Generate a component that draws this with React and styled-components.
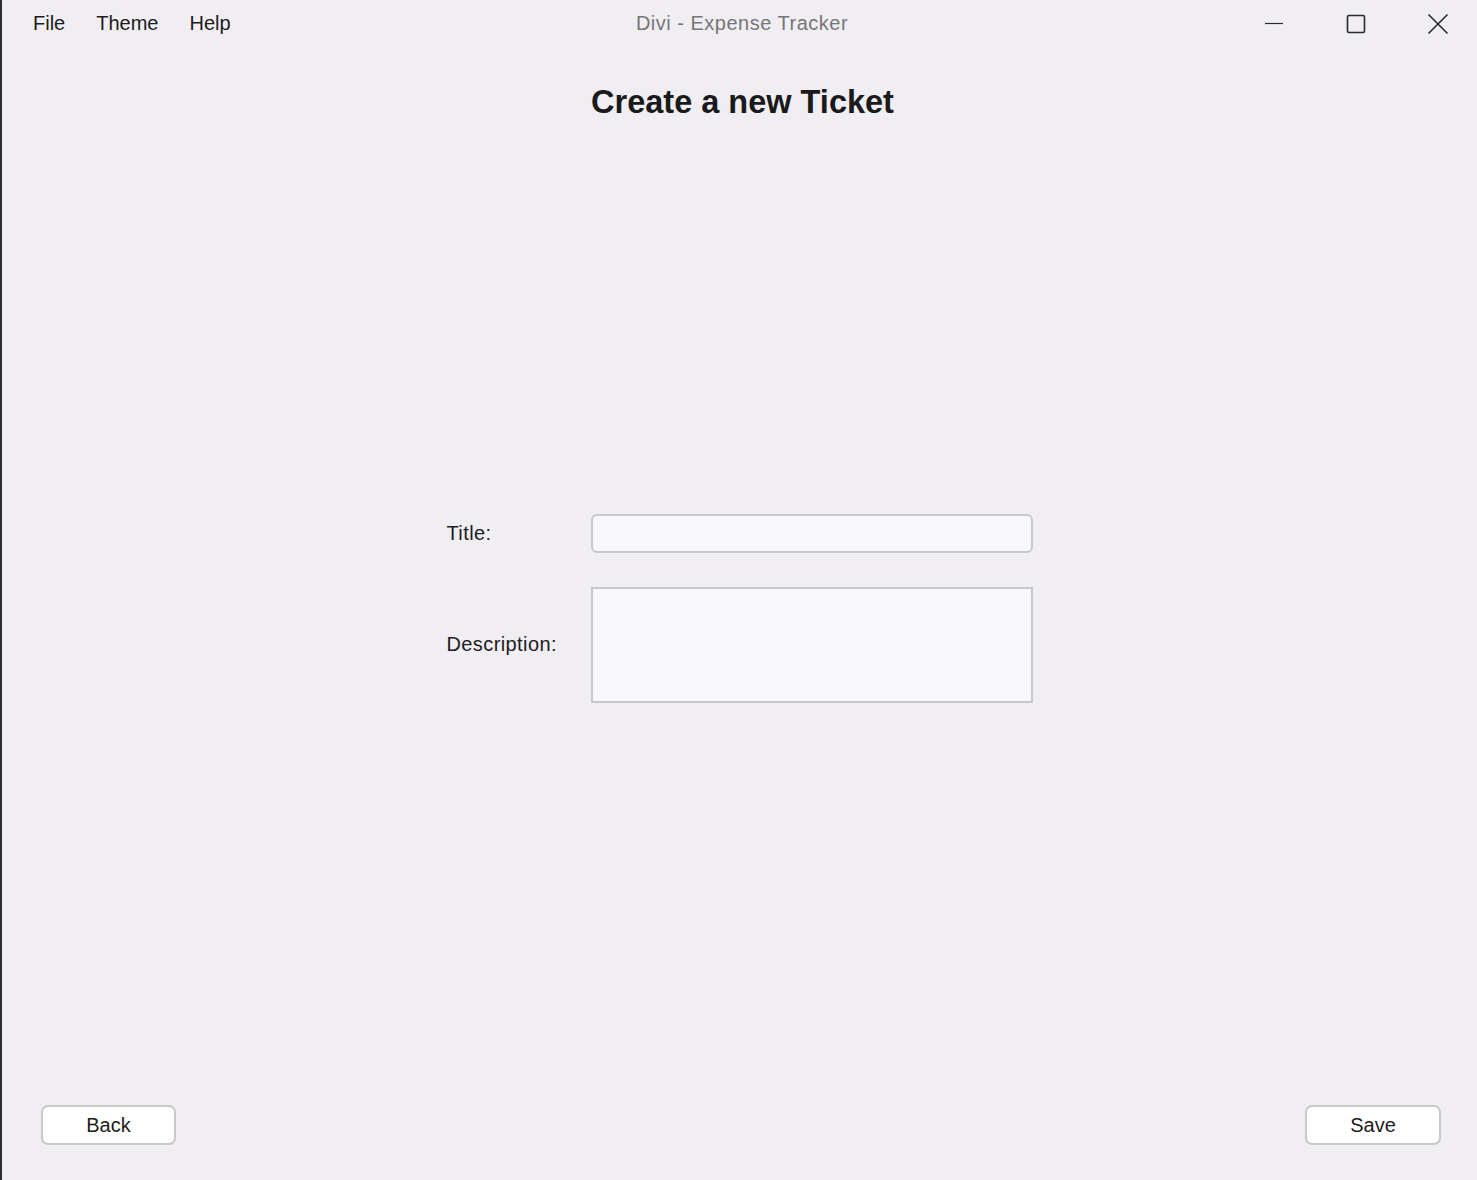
import React from 'react'
import styled, { createGlobalStyle } from 'styled-components'

const GlobalStyle = createGlobalStyle`
  html, body {
    margin: 0;
    padding: 0;
    background: #f0eef3;
  }
  * {
    box-sizing: border-box;
  }
`

const Window = styled.div`
  display: flex;
  flex-direction: column;
  height: 100vh;
  border-left: 2px solid #2e2e30;
  background: #f0eef3;
  font-family: 'Liberation Sans', Arial, sans-serif;
  color: #1c1c1c;
`

const TitleBar = styled.div`
  display: grid;
  grid-template-columns: 1fr auto 1fr;
  align-items: center;
  height: 45px;
  padding-top: 2px;
`

const Menu = styled.div`
  display: flex;
  gap: 31px;
  padding-left: 31px;
`

const MenuItem = styled.span`
  font-size: 20px;
`

const WindowTitle = styled.span`
  font-size: 20px;
  color: #767676;
  letter-spacing: 0.5px;
  padding-left: 5px;
`

const Controls = styled.div`
  display: flex;
  justify-content: flex-end;
  gap: 4px;
  height: 100%;
`

const Control = styled.div`
  width: 78px;
  display: flex;
  align-items: center;
  justify-content: center;
`

const Heading = styled.h1`
  margin: 0;
  padding: 38px 0 0 6px;
  text-align: center;
  font-size: 32.5px;
  font-weight: 700;
  line-height: 38px;
  color: #1a1a1a;
`

const FormArea = styled.div`
  flex: 1;
  display: flex;
  align-items: center;
  justify-content: center;
`

const Form = styled.div`
  display: grid;
  grid-template-columns: 144px 442px;
  row-gap: 34px;
  align-items: center;
  padding-bottom: 3px;
`

const Label = styled.label`
  font-size: 20px;
  letter-spacing: 0.4px;
`

const TextInput = styled.input`
  height: 39px;
  border: 2px solid #c8c8ca;
  border-radius: 6px;
  background: #f8f8fa;
  outline: none;
`

const TextArea = styled.textarea`
  height: 116px;
  border: 2px solid #c8c8ca;
  border-radius: 0;
  background: #f8f8fa;
  resize: none;
  outline: none;
`

const Footer = styled.div`
  display: flex;
  justify-content: space-between;
  padding: 7px 36px 35px 39px;
`

const Button = styled.button`
  width: ${p => p.$w}px;
  height: 40px;
  border: 2px solid #c8c8ca;
  border-radius: 7px;
  background: #ffffff;
  font-family: 'Liberation Sans', Arial, sans-serif;
  font-size: 20px;
  color: #1c1c1c;
`

export default function App() {
  return (
    <Window>
      <GlobalStyle />
      <TitleBar>
        <Menu>
          <MenuItem>File</MenuItem>
          <MenuItem>Theme</MenuItem>
          <MenuItem>Help</MenuItem>
        </Menu>
        <WindowTitle>Divi - Expense Tracker</WindowTitle>
        <Controls>
          <Control>
            <svg width="20" height="20" viewBox="0 0 20 20">
              <line x1="1" y1="9.5" x2="19" y2="9.5" stroke="#2a2a2a" strokeWidth="1.2" />
            </svg>
          </Control>
          <Control>
            <svg width="20" height="20" viewBox="0 0 20 20">
              <rect x="1.5" y="1.5" width="17" height="17" rx="1.5" fill="none" stroke="#2a2a2a" strokeWidth="1.6" />
            </svg>
          </Control>
          <Control>
            <svg width="22" height="22" viewBox="0 0 22 22">
              <path d="M1.5 1.5 L20.5 20.5 M20.5 1.5 L1.5 20.5" stroke="#2a2a2a" strokeWidth="1.6" />
            </svg>
          </Control>
        </Controls>
      </TitleBar>

      <Heading>Create a new Ticket</Heading>

      <FormArea>
        <Form>
          <Label>Title:</Label>
          <TextInput type="text" />
          <Label>Description:</Label>
          <TextArea />
        </Form>
      </FormArea>

      <Footer>
        <Button $w={135}>Back</Button>
        <Button $w={136}>Save</Button>
      </Footer>
    </Window>
  )
}
